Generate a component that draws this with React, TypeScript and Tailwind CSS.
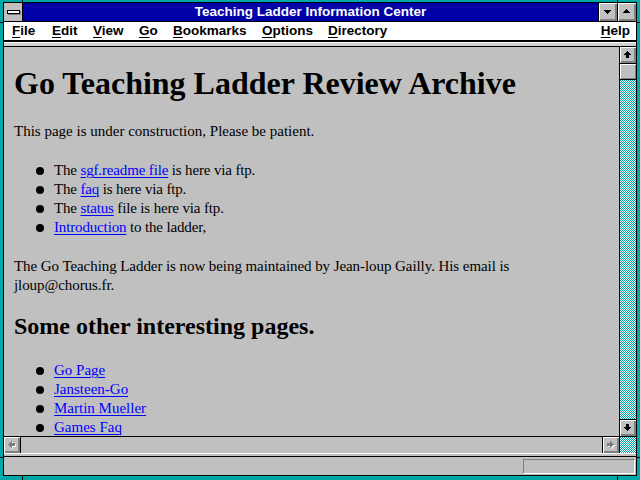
import React from 'react';

type Dir = 'up' | 'down' | 'left' | 'right';

const SHAPES: Record<Dir, number[][]> = {
  up: [[7, 4, 1, 1], [6, 5, 3, 1], [5, 6, 5, 1], [4, 7, 7, 1], [6, 8, 3, 3]],
  down: [[6, 4, 3, 3], [4, 7, 7, 1], [5, 8, 5, 1], [6, 9, 3, 1], [7, 10, 1, 1]],
  left: [[4, 7, 1, 1], [5, 6, 1, 3], [6, 5, 1, 5], [7, 4, 1, 7], [8, 6, 3, 3]],
  right: [[4, 6, 3, 3], [7, 4, 1, 7], [8, 5, 1, 5], [9, 6, 1, 3], [10, 7, 1, 1]],
};

function ArrowSvg({ dir, disabled }: { dir: Dir; disabled?: boolean }) {
  const rects = SHAPES[dir];
  return (
    <svg width="16" height="16" viewBox="0 0 16 16" shapeRendering="crispEdges" className="block">
      {disabled &&
        rects.map((r, i) => (
          <rect key={'s' + i} x={r[0] + 1} y={r[1] + 1} width={r[2]} height={r[3]} fill="#ffffff" />
        ))}
      {rects.map((r, i) => (
        <rect key={i} x={r[0]} y={r[1]} width={r[2]} height={r[3]} fill={disabled ? '#808080' : '#000000'} />
      ))}
    </svg>
  );
}

function ScrollBtn({ dir, disabled }: { dir: Dir; disabled?: boolean }) {
  return (
    <div className="w-[16px] h-[16px] shrink-0 bg-[#c0c0c0] shadow-[inset_1px_1px_0_#ffffff,inset_-1px_-1px_0_#808080,inset_-2px_-2px_0_#808080]">
      <ArrowSvg dir={dir} disabled={disabled} />
    </div>
  );
}

function TitleBtn({ up }: { up?: boolean }) {
  const rects = up
    ? [[8, 6, 1, 1], [7, 7, 3, 1], [6, 8, 5, 1], [5, 9, 7, 1]]
    : [[5, 7, 7, 1], [6, 8, 5, 1], [7, 9, 3, 1], [8, 10, 1, 1]];
  return (
    <div className="w-[18px] h-[18px] shrink-0 bg-[#c0c0c0] shadow-[inset_1px_1px_0_#ffffff,inset_-1px_-1px_0_#808080,inset_-2px_-2px_0_#808080]">
      <svg width="18" height="18" viewBox="0 0 18 18" shapeRendering="crispEdges" className="block">
        {rects.map((r, i) => (
          <rect key={i} x={r[0]} y={r[1]} width={r[2]} height={r[3]} fill="#000000" />
        ))}
      </svg>
    </div>
  );
}

function Checker({ id, className }: { id: string; className?: string }) {
  return (
    <div className={className}>
      <svg width="100%" height="100%" className="block" shapeRendering="crispEdges">
        <defs>
          <pattern id={id} x="0" y="0" width="2" height="2" patternUnits="userSpaceOnUse">
            <rect x="0" y="0" width="2" height="2" fill="#ffffff" />
            <rect x="0" y="0" width="1" height="1" fill="#00a8a8" />
            <rect x="1" y="1" width="1" height="1" fill="#00a8a8" />
          </pattern>
        </defs>
        <rect x="0" y="0" width="100%" height="100%" fill={`url(#${id})`} />
      </svg>
    </div>
  );
}

function MenuItem({ first, rest, w }: { first: string; rest: string; w?: string }) {
  return (
    <span className={`shrink-0 ${w ?? ''}`}>
      <span className="underline underline-offset-[2px] decoration-[1px]">{first}</span>
      {rest}
    </span>
  );
}

function Bullet({ children }: { children: React.ReactNode }) {
  return (
    <li className="flex items-center h-[19px]">
      <span className="ml-[22px] mr-[10px] w-[8px] h-[8px] rounded-full bg-black shrink-0" />
      <span>{children}</span>
    </li>
  );
}

function A({ children }: { children: React.ReactNode }) {
  return <span className="text-[#0000ff] underline decoration-[1px] underline-offset-[2px]">{children}</span>;
}

export default function App() {
  return (
    <div className="relative w-[640px] h-[480px] bg-[#00a8a8] pt-[2px] pl-[3px] pr-[3px] pb-[4px] overflow-hidden">
      {/* resize border ticks */}
      <div className="absolute left-[22px] top-0 w-px h-[3px] bg-black" />
      <div className="absolute left-[617px] top-0 w-px h-[3px] bg-black" />
      <div className="absolute left-[22px] bottom-0 w-px h-[5px] bg-black" />
      <div className="absolute left-[617px] bottom-0 w-px h-[5px] bg-black" />
      <div className="absolute left-0 top-[22px] w-[3px] h-px bg-black" />
      <div className="absolute right-0 top-[22px] w-[3px] h-px bg-black" />
      <div className="absolute left-0 top-[457px] w-[3px] h-px bg-black" />
      <div className="absolute right-0 top-[457px] w-[3px] h-px bg-black" />

      <div className="flex flex-col h-full border border-black bg-[#c0c0c0]">
        {/* Title bar */}
        <div className="flex h-[19px] border-b border-black shrink-0">
          <div className="w-[18px] h-[18px] bg-[#c0c0c0] border-r border-black flex items-center justify-center shrink-0 box-content">
            <div className="w-[13px] h-[4px] bg-white border border-black shadow-[1px_1px_0_#808080]" />
          </div>
          <div className="flex-1 bg-[#0000a8] flex items-center justify-center text-white font-bold text-[13.5px] leading-[18px] font-['Liberation_Sans',Arial,sans-serif]">
            Teaching Ladder Information Center
          </div>
          <div className="border-l border-black">
            <TitleBtn />
          </div>
          <div className="border-l border-black">
            <TitleBtn up />
          </div>
        </div>

        {/* Menu bar */}
        <div className="flex items-center h-[19px] bg-white border-b border-black shrink-0 pl-[8px] pr-[6px] text-black font-bold text-[13.5px] leading-[18px] font-['Liberation_Sans',Arial,sans-serif]">
          <MenuItem first="F" rest="ile" w="w-[40px]" />
          <MenuItem first="E" rest="dit" w="w-[41px]" />
          <MenuItem first="V" rest="iew" w="w-[46px]" />
          <MenuItem first="G" rest="o" w="w-[34px]" />
          <MenuItem first="B" rest="ookmarks" w="w-[89px]" />
          <MenuItem first="O" rest="ptions" w="w-[66px]" />
          <MenuItem first="D" rest="irectory" />
          <span className="ml-auto">
            <MenuItem first="H" rest="elp" />
          </span>
        </div>

        {/* toolbar strip */}
        <div className="shrink-0 border-y border-black">
          <div className="h-px bg-white" />
          <div className="h-[3px] bg-[#d0d0d0]" />
        </div>

        {/* Middle */}
        <div className="flex h-[406px] shrink-0">
          <div className="flex flex-col flex-1 min-w-0">
            <div className="flex-1 overflow-hidden bg-[#c0c0c0] pl-[10px] pt-[18px] text-black font-['Liberation_Serif','Times_New_Roman',serif]">
              <h1 className="text-[32px] font-bold leading-[37px] whitespace-nowrap">Go Teaching Ladder Review Archive</h1>
              <p className="mt-[20px] text-[15px] leading-[19px]">This page is under construction, Please be patient.</p>
              <ul className="mt-[20px] text-[15px] leading-[19px] tracking-[-0.15px]">
                <Bullet>
                  The <A>sgf.readme file</A> is here via ftp.
                </Bullet>
                <Bullet>
                  The <A>faq</A> is here via ftp.
                </Bullet>
                <Bullet>
                  The <A>status</A> file is here via ftp.
                </Bullet>
                <Bullet>
                  <A>Introduction</A> to the ladder,
                </Bullet>
              </ul>
              <p className="mt-[20px] text-[15px] leading-[19px] whitespace-nowrap tracking-[-0.07px]">
                The Go Teaching Ladder is now being maintained by Jean-loup Gailly. His email is
                <br />
                jloup@chorus.fr.
              </p>
              <h2 className="mt-[17px] text-[24px] font-bold leading-[28px] whitespace-nowrap">Some other interesting pages.</h2>
              <ul className="mt-[21px] text-[15px] leading-[19px]">
                <Bullet>
                  <A>Go Page</A>
                </Bullet>
                <Bullet>
                  <A>Jansteen-Go</A>
                </Bullet>
                <Bullet>
                  <A>Martin Mueller</A>
                </Bullet>
                <Bullet>
                  <A>Games Faq</A>
                </Bullet>
              </ul>
            </div>
            {/* horizontal scrollbar */}
            <div className="flex h-[17px] shrink-0 border-t border-black bg-[#c0c0c0]">
              <div className="border-r border-black">
                <ScrollBtn dir="left" disabled />
              </div>
              <div className="flex-1" />
              <div className="border-l border-black">
                <ScrollBtn dir="right" disabled />
              </div>
            </div>
          </div>
          {/* vertical scrollbar */}
          <div className="flex flex-col w-[17px] shrink-0 border-l border-black">
            <ScrollBtn dir="up" />
            <div className="h-[16px] shrink-0 border-t border-black bg-[#c0c0c0] shadow-[inset_1px_1px_0_#ffffff,inset_-1px_-1px_0_#808080]" />
            <Checker id="chkTrack" className="flex-1 border-t border-black" />
            <div className="border-y border-black">
              <ScrollBtn dir="down" />
            </div>
            <Checker id="chkCorner" className="h-[16px] shrink-0" />
          </div>
        </div>

        {/* separator */}
        <div className="shrink-0 border-b border-black">
          <div className="h-px bg-white" />
          <div className="h-[2px] bg-[#c0c0c0]" />
        </div>

        {/* status bar */}
        <div className="flex-1 flex justify-end items-start pt-[2px] pr-[1px] bg-[#c0c0c0]">
          <div className="w-[112px] h-[15px] border-t border-l border-[#808080] border-b border-r border-b-white border-r-white" />
        </div>
      </div>
    </div>
  );
}
